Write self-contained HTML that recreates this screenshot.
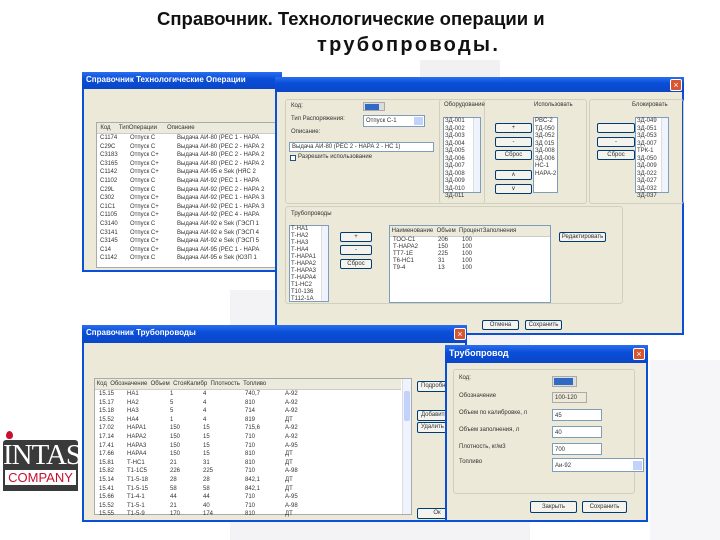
<!DOCTYPE html>
<html><head><meta charset="utf-8"><style>
*{margin:0;padding:0;box-sizing:border-box}
body{width:720px;height:540px;overflow:hidden;background:#fff;position:relative;font-family:"Liberation Sans",sans-serif}
.a{position:absolute}
.win{position:absolute;background:#ece9d8;border:2px solid #0a4fd8;border-top:none}
.tb{position:absolute;left:-2px;right:-2px;top:0;background:linear-gradient(#2a6ff0,#0a4fd8 40%,#0a46c8);color:#fff;font-size:8px;padding:3px 4px;font-weight:bold}
.cl{position:absolute;width:12px;height:12px;background:#d8552f;border:1px solid #fff;border-radius:2px;color:#fff;font-size:9px;line-height:10px;text-align:center}
.w{position:absolute;background:#fff;border:1px solid #7f9db9}
.t{position:absolute;font-size:6px;color:#333;white-space:nowrap;line-height:8.6px}
.bt{position:absolute;background:#f4f3ee;border:1px solid #003c74;border-radius:2px;font-size:6px;text-align:center;color:#333;line-height:9px}
.gb{position:absolute;border:1px solid #d0d0bf;border-radius:3px}
.hd{position:absolute;background:#ebeadb;border-bottom:1px solid #ccc;font-size:6px;color:#333;white-space:pre;line-height:10px}
.sb{position:absolute;background:#eef3fd;border-left:1px solid #ddd}
</style></head><body>
<div class="a" style="left:420px;top:60px;width:80px;height:480px;background:#f1f1f3"></div>
<div class="a" style="left:230px;top:290px;width:300px;height:250px;background:#f3f3f5"></div>
<div class="a" style="left:650px;top:360px;width:70px;height:180px;background:#f6f6f8"></div>

<div class="a" style="left:157px;top:8px;font-size:18.5px;font-weight:bold;color:#111;white-space:nowrap">Справочник. Технологические операции и</div>
<div class="a" style="left:317px;top:34px;font-size:20px;font-weight:bold;letter-spacing:2.3px;color:#111;white-space:nowrap">трубопроводы.</div>

<!-- Window 1 -->
<div class="win" style="left:82px;top:72px;width:200px;height:200px">
<div class="tb" style="height:17px">Справочник Технологические Операции</div>
<div class="w" style="left:12px;top:50px;width:190px;height:146px;border-color:#aaa">
<div class="hd" style="left:0;top:0;width:190px;height:11px">  Код     ТипОперации      Описание</div>
<div class="t" style="left:3px;top:11px">C1174<br>C29C<br>C3183<br>C3165<br>C1142<br>C1102<br>C29L<br>C302<br>C1C1<br>C1105<br>C3140<br>C3141<br>C3145<br>C14<br>C1142</div>
<div class="t" style="left:33px;top:11px">Отпуск С<br>Отпуск С<br>Отпуск С+<br>Отпуск С+<br>Отпуск С+<br>Отпуск С<br>Отпуск С<br>Отпуск С+<br>Отпуск С+<br>Отпуск С+<br>Отпуск С<br>Отпуск С+<br>Отпуск С+<br>Отпуск С+<br>Отпуск С</div>
<div class="t" style="left:80px;top:11px">Выдача АИ-80 (PEC 1 - HAPA<br>Выдача АИ-80 (PEC 2 - НАРА 2<br>Выдача АИ-80 (PEC 2 - НАРА 2<br>Выдача АИ-80 (PEC 2 - НАРА 2<br>Выдача АИ-95 е Sek (НЯС 2<br>Выдача АИ-92 (PEC 1 - НАРА<br>Выдача АИ-92 (PEC 2 - НАРА 2<br>Выдача АИ-92 (PEC 1 - НАРА 3<br>Выдача АИ-92 (PEC 1 - НАРА 3<br>Выдача АИ-92 (PEC 4 - НАРА<br>Выдача АИ-92 е Sek (ГЭСП 1<br>Выдача АИ-92 е Sek (ГЭСП 4<br>Выдача АИ-92 е Sek (ГЭСП 5<br>Выдача АИ-95 (PEC 1 - НАРА<br>Выдача АИ-95 е Sek (ЮЗП 1</div>
</div>
</div>

<!-- Window 2 -->
<div class="win" style="left:275px;top:77px;width:409px;height:258px">
<div class="tb" style="height:15px"></div>
<div class="cl" style="left:393px;top:2px">×</div>
<div class="gb" style="left:8px;top:22px;width:200px;height:105px"></div>
<div class="t" style="left:14px;top:25px">Код:</div>
<div class="w" style="left:86px;top:25px;width:22px;height:9px;background:#dcdcdc;border-color:#aaa"><div style="margin:1px;width:14px;height:6px;background:#316ac5"></div></div>
<div class="t" style="left:14px;top:38px">Тип Распоряжения:</div>
<div class="w" style="left:86px;top:38px;width:62px;height:12px"><span class="t" style="left:2px;top:1px">Отпуск С-1</span><div class="a" style="right:1px;top:1px;width:9px;height:8px;background:#c1d3fb"></div></div>
<div class="t" style="left:14px;top:51px">Описание:</div>
<div class="w" style="left:12px;top:65px;width:145px;height:10px"><span class="t" style="left:2px;top:0">Выдача АИ-80 (PEC 2 - НАРА 2 - НС 1)</span></div>
<div class="a" style="left:13px;top:78px;width:6px;height:6px;border:1px solid #1c5180;background:#fff"></div>
<div class="t" style="left:21px;top:76px">Разрешить использование</div>
<div class="gb" style="left:162px;top:22px;width:148px;height:105px"></div>
<div class="t" style="left:167px;top:24px">Оборудование</div>
<div class="t" style="left:257px;top:24px">Использовать</div>
<div class="w" style="left:166px;top:40px;width:38px;height:76px"><div class="t" style="left:1px;top:0;line-height:7.5px">ЗД-001<br>ЗД-002<br>ЗД-003<br>ЗД-004<br>ЗД-005<br>ЗД-006<br>ЗД-007<br>ЗД-008<br>ЗД-009<br>ЗД-010<br>ЗД-011</div><div class="sb" style="right:0;top:0;width:7px;height:74px"></div></div>
<div class="bt" style="left:218px;top:46px;width:37px;height:10px">+</div>
<div class="bt" style="left:218px;top:60px;width:37px;height:10px">-</div>
<div class="bt" style="left:218px;top:73px;width:37px;height:10px">Сброс</div>
<div class="bt" style="left:218px;top:93px;width:37px;height:10px">∧</div>
<div class="bt" style="left:218px;top:107px;width:37px;height:10px">∨</div>
<div class="w" style="left:256px;top:40px;width:25px;height:76px"><div class="t" style="left:1px;top:0;line-height:7.5px">PBC-2<br>ТД-050<br>ЗД-052<br>ЗД 015<br>ЗД-008<br>ЗД-006<br>НС-1<br>НАРА-2</div></div>
<div class="gb" style="left:312px;top:22px;width:95px;height:105px"></div>
<div class="t" style="left:355px;top:24px">Блокировать</div>
<div class="bt" style="left:320px;top:46px;width:38px;height:10px"></div>
<div class="bt" style="left:320px;top:60px;width:38px;height:10px">-</div>
<div class="bt" style="left:320px;top:73px;width:38px;height:10px">Сброс</div>
<div class="w" style="left:358px;top:40px;width:34px;height:76px"><div class="t" style="left:1px;top:0;line-height:7.5px">ЗД-049<br>ЗД-051<br>ЗД-053<br>ЗД-007<br>ТРК-1<br>ЗД-050<br>ЗД-009<br>ЗД-022<br>ЗД-027<br>ЗД-032<br>ЗД-037</div><div class="sb" style="right:0;top:0;width:7px;height:74px"></div></div>
<div class="gb" style="left:8px;top:129px;width:338px;height:98px"></div>
<div class="t" style="left:14px;top:133px">Трубопроводы</div>
<div class="w" style="left:12px;top:148px;width:40px;height:77px"><div class="t" style="left:1px;top:0;line-height:7px">Т-НА1<br>Т-НА2<br>Т-НА3<br>Т-НА4<br>Т-НАРА1<br>Т-НАРА2<br>Т-НАРА3<br>Т-НАРА4<br>Т1-НС2<br>Т10-136<br>Т112-1А</div><div class="sb" style="right:0;top:0;width:7px;height:75px"></div></div>
<div class="bt" style="left:63px;top:155px;width:32px;height:10px">+</div>
<div class="bt" style="left:63px;top:168px;width:32px;height:10px">-</div>
<div class="bt" style="left:63px;top:182px;width:32px;height:10px">Сброс</div>
<div class="w" style="left:112px;top:148px;width:162px;height:78px"><div class="hd" style="left:0;top:0;width:160px;height:11px"> Наименование  Объем  ПроцентЗаполнения</div><div class="t" style="left:3px;top:11px;line-height:7px">ТОО-С1<br>Т-НАРА2<br>ТТ7-1Е<br>Т6-НС1<br>Т9-4</div><div class="t" style="left:48px;top:11px;line-height:7px">206<br>150<br>225<br>31<br>13</div><div class="t" style="left:72px;top:11px;line-height:7px">100<br>100<br>100<br>100<br>100</div></div>
<div class="bt" style="left:282px;top:155px;width:47px;height:10px">Редактировать</div>
<div class="bt" style="left:205px;top:243px;width:37px;height:10px">Отмена</div>
<div class="bt" style="left:248px;top:243px;width:37px;height:10px">Сохранить</div>
</div>

<!-- Window 3 -->
<div class="win" style="left:82px;top:325px;width:385px;height:197px">
<div class="tb" style="height:18px">Справочник Трубопроводы</div>
<div class="cl" style="left:370px;top:3px">×</div>
<div class="w" style="left:10px;top:53px;width:318px;height:137px;border-color:#aaa">
<div class="hd" style="left:0;top:0;width:306px;height:11px"> Код  Обозначение  Объем  СтояКалибр  Плотность  Топливо</div>
<div class="t" style="left:4px;top:11px;line-height:8.6px">15.15<br>15.17<br>15.18<br>15.52<br>17.02<br>17.14<br>17.41<br>17.66<br>15.81<br>15.82<br>15.14<br>15.41<br>15.66<br>15.52<br>15.55</div>
<div class="t" style="left:32px;top:11px;line-height:8.6px">НА1<br>НА2<br>НА3<br>НА4<br>НАРА1<br>НАРА2<br>НАРА3<br>НАРА4<br>Т-НС1<br>Т1-1С5<br>Т1-5-18<br>Т1-5-15<br>Т1-4-1<br>Т1-5-1<br>Т1-5-9</div>
<div class="t" style="left:75px;top:11px;line-height:8.6px">1<br>5<br>5<br>1<br>150<br>150<br>150<br>150<br>21<br>226<br>28<br>58<br>44<br>21<br>170</div>
<div class="t" style="left:108px;top:11px;line-height:8.6px">4<br>4<br>4<br>4<br>15<br>15<br>15<br>15<br>31<br>225<br>28<br>58<br>44<br>40<br>174</div>
<div class="t" style="left:150px;top:11px;line-height:8.6px">740,7<br>810<br>714<br>819<br>715,6<br>710<br>710<br>810<br>810<br>710<br>842,1<br>842,1<br>710<br>710<br>810</div>
<div class="t" style="left:190px;top:11px;line-height:8.6px">А-92<br>А-92<br>А-92<br>ДТ<br>А-92<br>А-92<br>А-95<br>ДТ<br>ДТ<br>А-98<br>ДТ<br>ДТ<br>А-95<br>А-98<br>ДТ</div>
<div class="sb" style="right:0;top:0;width:9px;height:135px"><div style="margin:12px 1px;height:30px;background:#c1d3fb;border-radius:2px"></div></div>
</div>
<div class="bt" style="left:333px;top:56px;width:40px;height:11px;text-align:left;padding-left:3px">Подробн</div>
<div class="bt" style="left:333px;top:85px;width:40px;height:11px;text-align:left;padding-left:3px">Добавить</div>
<div class="bt" style="left:333px;top:97px;width:40px;height:11px;text-align:left;padding-left:3px">Удалить</div>
<div class="bt" style="left:333px;top:183px;width:40px;height:11px">Ок</div>
</div>

<!-- Window 4 -->
<div class="win" style="left:445px;top:345px;width:203px;height:177px">
<div class="tb" style="height:18px;font-size:9px">Трубопровод</div>
<div class="cl" style="left:186px;top:3px">×</div>
<div class="gb" style="left:6px;top:24px;width:182px;height:125px"></div>
<div class="t" style="left:12px;top:29px">Код:</div>
<div class="t" style="left:12px;top:47px">Обозначение</div>
<div class="t" style="left:12px;top:64px">Объем по калибровке, л</div>
<div class="t" style="left:12px;top:81px">Объем заполнения, л</div>
<div class="t" style="left:12px;top:98px">Плотность, кг/м3</div>
<div class="t" style="left:12px;top:113px">Топливо</div>
<div class="w" style="left:105px;top:31px;width:25px;height:11px;background:#ddd;border-color:#aaa"><div style="margin:1px;width:19px;height:7px;background:#316ac5"></div></div>
<div class="w" style="left:105px;top:47px;width:35px;height:11px;background:#ece9d8;border-color:#aaa"><span class="t" style="left:2px;top:1px">100-120</span></div>
<div class="w" style="left:105px;top:64px;width:50px;height:12px"><span class="t" style="left:2px;top:2px">45</span></div>
<div class="w" style="left:105px;top:81px;width:50px;height:12px"><span class="t" style="left:2px;top:2px">40</span></div>
<div class="w" style="left:105px;top:98px;width:50px;height:12px"><span class="t" style="left:2px;top:2px">700</span></div>
<div class="w" style="left:105px;top:113px;width:92px;height:14px"><span class="t" style="left:2px;top:3px">Аи-92</span><div class="a" style="right:1px;top:2px;width:9px;height:9px;background:#c1d3fb"></div></div>
<div class="bt" style="left:83px;top:156px;width:47px;height:12px;line-height:11px">Закрыть</div>
<div class="bt" style="left:135px;top:156px;width:45px;height:12px;line-height:11px">Сохранить</div>
</div>

<!-- Logo -->
<div class="a" style="left:6px;top:431px;width:7px;height:8px;background:#c8102e;border-radius:50% 50% 50% 50%/60% 60% 40% 40%"></div>
<div class="a" style="left:3px;top:440px;width:75px;height:30px;background:#3a3a3a;border-radius:3px 3px 0 0;color:#fff;font-family:'Liberation Serif',serif;font-size:29px;line-height:30px;text-align:center;letter-spacing:-1px">INTAS</div>
<div class="a" style="left:3px;top:470px;width:75px;height:17px;background:#fff;border:2px solid #3a3a3a;border-top:none;color:#c8102e;font-size:13px;line-height:15px;text-align:center">COMPANY</div>
<div class="a" style="left:3px;top:486px;width:75px;height:5px;background:#3a3a3a"></div>
</body></html>
